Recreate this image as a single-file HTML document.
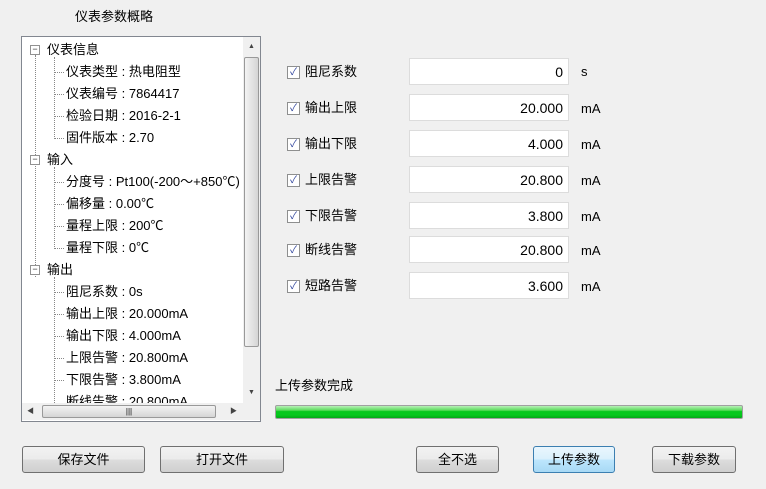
<!DOCTYPE html>
<html><head><meta charset="utf-8"><style>
body{margin:0;width:766px;height:489px;background:#f0f0f0;font-family:"Liberation Sans","Noto Sans CJK SC",sans-serif;font-size:13px;color:#000;position:relative;overflow:hidden}
.a{position:absolute;white-space:nowrap;line-height:16px}
.tree{position:absolute;left:21px;top:36px;width:238px;height:384px;border:1px solid #828790;background:#fff;overflow:hidden}
.vs{position:absolute;left:221px;top:0;width:17px;height:366px;background:#f0f0f0}
.hs{position:absolute;left:0;top:366px;width:221px;height:17px;background:#f0f0f0}
.thumb{position:absolute;border:1px solid #999;border-radius:2px;background:linear-gradient(90deg,#f3f3f3,#dcdcdc)}
.r{position:absolute;left:0;height:20px;line-height:20px;white-space:nowrap}
.pm{position:absolute;width:8px;height:8px;border:1px solid #919191;background:#fff;font-size:9px;line-height:7px;text-align:center;color:#333}
.dv{position:absolute;border-left:1px dotted #888}
.dh{position:absolute;border-top:1px dotted #888;width:10px}
.cb{position:absolute;left:287px;width:11px;height:11px;border:1px solid #8e8f8f;background:#fff;font-size:10px;line-height:11px;text-align:center;color:#2a3f9a}
.inp{position:absolute;left:409px;width:160px;height:27px;border:1px solid #dcdcdc;background:#fff;text-align:right;line-height:27px;box-sizing:border-box;padding-right:5px;font-size:14px}
.btn{position:absolute;top:446px;height:27px;border:1px solid #707070;border-radius:3px;background:linear-gradient(#f2f2f2,#ebebeb 50%,#dddddd 50%,#cfcfcf);text-align:center;line-height:26px;box-sizing:border-box}
</style></head><body>
<div class="a" style="left:75px;top:9px">仪表参数概略</div>
<div class="tree">
<div class="dv" style="left:13px;top:18px;height:222px"></div>
<div class="dv" style="left:32px;top:20px;height:82px"></div>
<div class="dv" style="left:32px;top:130px;height:82px"></div>
<div class="dv" style="left:32px;top:240px;height:130px"></div>
<div class="pm" style="left:8px;top:8px">−</div><div class="r" style="left:25px;top:3px">仪表信息</div>
<div class="dh" style="left:32px;top:35px"></div><div class="r" style="left:44px;top:25px">仪表类型 : 热电阻型</div>
<div class="dh" style="left:32px;top:57px"></div><div class="r" style="left:44px;top:47px">仪表编号 : 7864417</div>
<div class="dh" style="left:32px;top:79px"></div><div class="r" style="left:44px;top:69px">检验日期 : 2016-2-1</div>
<div class="dh" style="left:32px;top:101px"></div><div class="r" style="left:44px;top:91px">固件版本 : 2.70</div>
<div class="pm" style="left:8px;top:118px">−</div><div class="r" style="left:25px;top:113px">输入</div>
<div class="dh" style="left:32px;top:145px"></div><div class="r" style="left:44px;top:135px">分度号 : Pt100(-200～+850℃)</div>
<div class="dh" style="left:32px;top:167px"></div><div class="r" style="left:44px;top:157px">偏移量 : 0.00℃</div>
<div class="dh" style="left:32px;top:189px"></div><div class="r" style="left:44px;top:179px">量程上限 : 200℃</div>
<div class="dh" style="left:32px;top:211px"></div><div class="r" style="left:44px;top:201px">量程下限 : 0℃</div>
<div class="pm" style="left:8px;top:228px">−</div><div class="r" style="left:25px;top:223px">输出</div>
<div class="dh" style="left:32px;top:255px"></div><div class="r" style="left:44px;top:245px">阻尼系数 : 0s</div>
<div class="dh" style="left:32px;top:277px"></div><div class="r" style="left:44px;top:267px">输出上限 : 20.000mA</div>
<div class="dh" style="left:32px;top:299px"></div><div class="r" style="left:44px;top:289px">输出下限 : 4.000mA</div>
<div class="dh" style="left:32px;top:321px"></div><div class="r" style="left:44px;top:311px">上限告警 : 20.800mA</div>
<div class="dh" style="left:32px;top:343px"></div><div class="r" style="left:44px;top:333px">下限告警 : 3.800mA</div>
<div class="r" style="left:44px;top:355px">断线告警 : 20.800mA</div>
<div class="vs"><div class="a" style="left:5px;top:2px;font-size:7px;color:#444">▲</div><div class="thumb" style="left:1px;top:20px;width:13px;height:288px;background:linear-gradient(90deg,#f3f3f3,#d5d5d5)"></div><div class="a" style="left:5px;top:348px;font-size:7px;color:#444">▼</div></div>
<div class="hs"><div class="a" style="left:5px;top:1px;font-size:7px;color:#444">◀</div><div class="thumb" style="left:20px;top:2px;width:172px;height:11px;background:linear-gradient(#f3f3f3,#d5d5d5);font-size:8px;text-align:center;line-height:11px">|||</div><div class="a" style="left:208px;top:1px;font-size:7px;color:#444">▶</div></div>
<div style="position:absolute;left:221px;top:366px;width:17px;height:17px;background:#f0f0f0"></div>
</div>

<div class="cb" style="top:66px">✓</div><div class="a" style="left:305px;top:64px">阻尼系数</div><div class="inp" style="top:58px">0</div><div class="a" style="left:581px;top:64px">s</div>
<div class="cb" style="top:102px">✓</div><div class="a" style="left:305px;top:100px">输出上限</div><div class="inp" style="top:94px">20.000</div><div class="a" style="left:581px;top:101px">mA</div>
<div class="cb" style="top:138px">✓</div><div class="a" style="left:305px;top:136px">输出下限</div><div class="inp" style="top:130px">4.000</div><div class="a" style="left:581px;top:137px">mA</div>
<div class="cb" style="top:174px">✓</div><div class="a" style="left:305px;top:172px">上限告警</div><div class="inp" style="top:166px">20.800</div><div class="a" style="left:581px;top:173px">mA</div>
<div class="cb" style="top:210px">✓</div><div class="a" style="left:305px;top:208px">下限告警</div><div class="inp" style="top:202px">3.800</div><div class="a" style="left:581px;top:209px">mA</div>
<div class="cb" style="top:244px">✓</div><div class="a" style="left:305px;top:242px">断线告警</div><div class="inp" style="top:236px">20.800</div><div class="a" style="left:581px;top:243px">mA</div>
<div class="cb" style="top:280px">✓</div><div class="a" style="left:305px;top:278px">短路告警</div><div class="inp" style="top:272px">3.600</div><div class="a" style="left:581px;top:279px">mA</div>

<div class="a" style="left:275px;top:378px">上传参数完成</div>
<div style="position:absolute;left:275px;top:405px;width:466px;height:12px;border:1px solid #a0a0a0;border-radius:2px;background:linear-gradient(#b8f0b8,#5edc5e 35%,#06c81e 45%,#06c81e 75%,#04a818)"></div>

<div class="btn" style="left:22px;width:123px">保存文件</div>
<div class="btn" style="left:160px;width:124px">打开文件</div>
<div class="btn" style="left:416px;width:83px">全不选</div>
<div class="btn" style="left:533px;width:82px;border-color:#3c7fb1;background:linear-gradient(#eaf6fd,#d9f0fc 50%,#bee6fd 50%,#a7d9f5)">上传参数</div>
<div class="btn" style="left:652px;width:84px">下载参数</div>
</body></html>
